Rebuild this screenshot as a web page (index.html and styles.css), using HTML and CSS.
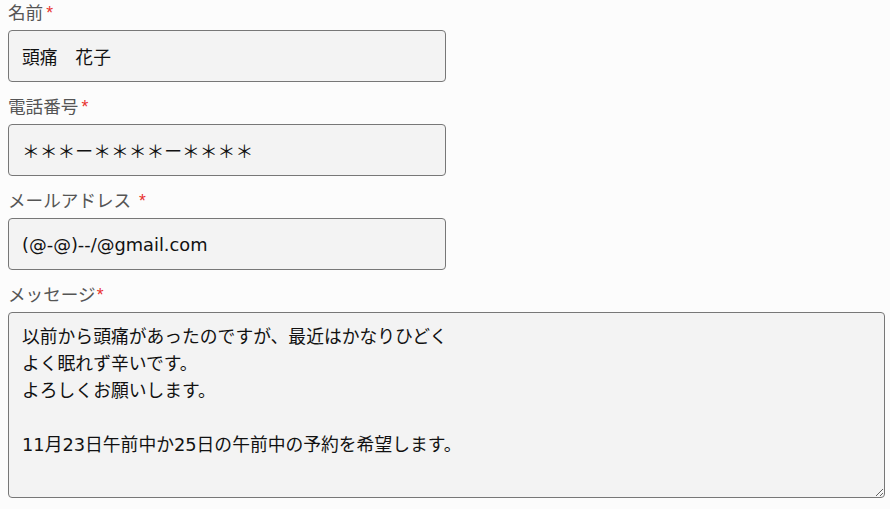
FILE: index.html
```html
<!DOCTYPE html>
<html lang="ja">
<head>
    <meta charset="UTF-8">
    <meta name="viewport" content="width=device-width, initial-scale=1.0">
    <title>お問い合わせ</title>
    <link rel="stylesheet" href="styles.css">
</head>
<body>

    <form class="contact-form">
        <!-- お名前 -->
        <div class="field">
            <label for="name">名前<span class="req">*</span></label>
            <input type="text" id="name" class="text-input" value="頭痛　花子">
        </div>

        <!-- 電話番号 -->
        <div class="field">
            <label for="tel">電話番号<span class="req">*</span></label>
            <input type="text" id="tel" class="text-input" value="＊＊＊ー＊＊＊＊ー＊＊＊＊">
        </div>

        <!-- メール -->
        <div class="field">
            <label for="mail">メールアドレス <span class="req">*</span></label>
            <input type="email" id="mail" class="text-input" value="(@-@)--/@gmail.com">
        </div>

        <!-- メッセージ -->
        <div class="field">
            <label for="message">メッセージ<span class="req req-tight">*</span></label>
            <textarea id="message" class="text-area">以前から頭痛があったのですが、最近はかなりひどく
よく眠れず辛いです。
よろしくお願いします。

11月23日午前中か25日の午前中の予約を希望します。</textarea>
        </div>
    </form>

</body>
</html>
```

FILE: styles.css
```css
body {
    margin: 0;
    padding: 2px 5px 0 8px;
    background: #fcfcfc;
    font-family: "Liberation Sans", "Noto Sans CJK JP", sans-serif;
    font-size: 17.6px;
}
.contact-form {
    display: flex;
    flex-direction: column;
    gap: 14px;
}
.field {
    display: flex;
    flex-direction: column;
    align-items: flex-start;
}
.field label {
    display: block;
    line-height: 22px;
    margin-bottom: 6px;
    color: #555;
}
.req {
    color: #e8322f;
    margin-left: 3px;
}
.req-tight {
    margin-left: 1px;
}
.text-input, .text-area {
    box-sizing: border-box;
    border: 1px solid #777;
    border-radius: 4px;
    background: #f3f3f3;
    color: #111;
    font-family: "DejaVu Sans", "Noto Sans CJK JP", sans-serif;
    font-size: 17.8px;
    padding: 0 13px;
    margin: 0;
    outline: none;
}
.text-input {
    width: 438px;
    height: 52px;
}
.text-area {
    width: 877px;
    height: 186px;
    padding: 10px 13px;
    line-height: 27px;
}
```
